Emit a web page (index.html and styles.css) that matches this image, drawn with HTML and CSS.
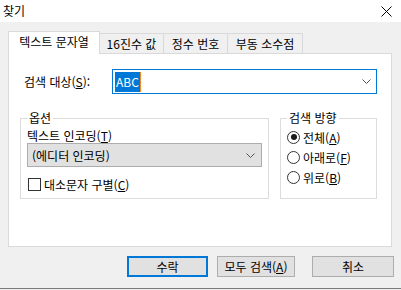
FILE: index.html
```html
<!DOCTYPE html>
<html lang="ko">
<head>
  <meta charset="UTF-8" />
  <title>찾기</title>
  <link rel="stylesheet" href="styles.css">
</head>
<body>
  <div class="window">
    <div class="titlebar">
      <span class="title">찾기</span>
      <svg class="close" width="11" height="11" viewBox="0 0 11 11">
        <path d="M0.5 0.5 L10.5 10.5 M10.5 0.5 L0.5 10.5" stroke="#000" stroke-width="1" fill="none" />
      </svg>
    </div>

    <div class="content">
      <div class="tabs">
        <div class="tab active">텍스트 문자열</div>
        <div class="tab tab-hex">16진수 값</div>
        <div class="tab tab-int">정수 번호</div>
        <div class="tab tab-float">부동 소수점</div>
      </div>

      <div class="panel">
        <div class="search-row">
          <label class="search-label">검색 대상(<u>S</u>):</label>
          <div class="combo">
            <span class="selection">ABC</span>
            <span class="caret"></span>
            <svg class="chevron" width="9" height="5" viewBox="0 0 9 5">
              <path d="M0.5 0.5 L4.5 4.5 L8.5 0.5" stroke="#555" stroke-width="1" fill="none" />
            </svg>
          </div>
        </div>

        <div class="groups">
          <fieldset class="group options">
            <legend>옵션</legend>
            <div class="field-label">텍스트 인코딩(<u>T</u>)</div>
            <div class="select">
              <span>(에디터 인코딩)</span>
              <svg class="chevron" width="9" height="5" viewBox="0 0 9 5">
                <path d="M0.5 0.5 L4.5 4.5 L8.5 0.5" stroke="#555" stroke-width="1" fill="none" />
              </svg>
            </div>
            <div class="check-row">
              <span class="checkbox"></span>
              <span>대소문자 구별(<u>C</u>)</span>
            </div>
          </fieldset>

          <fieldset class="group direction">
            <legend>검색 방향</legend>
            <div class="radio-row">
              <span class="radio checked"></span>
              <span>전체(<u>A</u>)</span>
            </div>
            <div class="radio-row">
              <span class="radio"></span>
              <span>아래로(<u>F</u>)</span>
            </div>
            <div class="radio-row">
              <span class="radio"></span>
              <span>위로(<u>B</u>)</span>
            </div>
          </fieldset>
        </div>
      </div>
    </div>

    <div class="buttons">
      <button class="btn btn-ok default">수락</button>
      <button class="btn btn-all">모두 검색(<u>A</u>)</button>
      <button class="btn btn-cancel">취소</button>
    </div>
  </div>
</body>
</html>
```

FILE: styles.css
```css
body {
  margin: 0;
  background-color: #f0f0f0;
  font-family: "Noto Sans CJK KR", "Noto Sans", sans-serif;
  font-size: 12px;
  color: #000;
}

u {
  text-decoration-thickness: 1px;
  text-underline-offset: 1px;
}

.window {
  width: 401px;
  height: 288px;
  border-bottom: 1px solid #7a7a7a;
  display: flex;
  flex-direction: column;
}

.titlebar {
  height: 22px;
  background: #fff;
  display: flex;
  align-items: center;
  justify-content: space-between;
  padding: 0 9px 0 3px;
}

.title {
  line-height: 16px;
}

.content {
  padding: 9px 0 0 8px;
}

/* tab strip */
.tabs {
  display: flex;
  align-items: flex-end;
  height: 22px;
}

.tab {
  box-sizing: border-box;
  height: 20px;
  border: 1px solid #d9d9d9;
  border-left: none;
  border-bottom: none;
  background: #f0f0f0;
  display: flex;
  align-items: center;
  justify-content: center;
  line-height: 16px;
}

.tab.active {
  width: 92px;
  height: 23px;
  margin-bottom: -1px;
  border-left: 1px solid #d9d9d9;
  background: #fff;
  position: relative;
  z-index: 1;
  padding-bottom: 2px;
}

.tab-hex {
  width: 64px;
}

.tab-int {
  width: 64px;
}

.tab-float {
  width: 75px;
}

.panel {
  box-sizing: border-box;
  width: 384px;
  height: 194px;
  background: #fff;
  border: 1px solid #d9d9d9;
  padding: 15px 13px 0 11px;
}

.search-row {
  display: flex;
  align-items: center;
  padding-left: 4px;
}

.search-label {
  width: 88px;
  line-height: 16px;
}

.combo {
  box-sizing: border-box;
  width: 265px;
  height: 25px;
  border: 1px solid #0078d7;
  display: flex;
  align-items: center;
  padding: 0 5px 0 2px;
}

.selection {
  background: #0078d7;
  color: #fff;
  height: 20px;
  line-height: 20px;
  padding: 0 1px;
}

.caret {
  width: 1px;
  height: 20px;
  background: #f08a24;
}

.combo .chevron {
  margin-left: auto;
}

/* group boxes */
.groups {
  display: flex;
  gap: 11px;
  margin-top: 17px;
}

.group {
  margin: 0;
  min-width: 0;
  box-sizing: border-box;
  border: 1px solid #dcdcdc;
  padding: 0 6px;
}

.group legend {
  padding: 0 2px;
  line-height: 14px;
}

.options {
  width: 249px;
  padding-bottom: 7px;
}

.direction {
  width: 97px;
  padding-bottom: 3px;
}

.field-label {
  line-height: 15px;
  margin-top: 3px;
}

.select {
  box-sizing: border-box;
  width: 235px;
  height: 24px;
  background: #e1e1e1;
  border: 1px solid #adadad;
  display: flex;
  align-items: center;
  justify-content: space-between;
  padding: 0 6px 0 4px;
}

.check-row {
  display: flex;
  align-items: center;
  gap: 3px;
  height: 13px;
  margin-top: 11px;
  padding-left: 1px;
}

.checkbox {
  box-sizing: border-box;
  width: 13px;
  height: 13px;
  border: 1px solid #333;
  background: #fff;
}

.radio-row {
  display: flex;
  align-items: center;
  gap: 3px;
  height: 20px;
}

.radio-row:first-of-type {
  margin-top: 2px;
}

.radio {
  box-sizing: border-box;
  width: 13px;
  height: 13px;
  border: 1px solid #333;
  border-radius: 50%;
  background: #fff;
  display: flex;
  align-items: center;
  justify-content: center;
}

.radio.checked::after {
  content: "";
  width: 6px;
  height: 6px;
  border-radius: 50%;
  background: #1a1a1a;
}

/* dialog buttons */
.buttons {
  display: flex;
  justify-content: flex-end;
  padding-right: 7px;
  margin-top: 9px;
}

.btn {
  box-sizing: border-box;
  height: 21px;
  background: #e1e1e1;
  border: 1px solid #adadad;
  font-family: inherit;
  font-size: 12px;
  color: #000;
  padding: 0;
  line-height: 16px;
}

.btn.default {
  border: 2px solid #0078d7;
}

.btn-ok {
  width: 81px;
  margin-right: 9px;
}

.btn-all {
  width: 78px;
  margin-right: 17px;
}

.btn-cancel {
  width: 82px;
}
```
